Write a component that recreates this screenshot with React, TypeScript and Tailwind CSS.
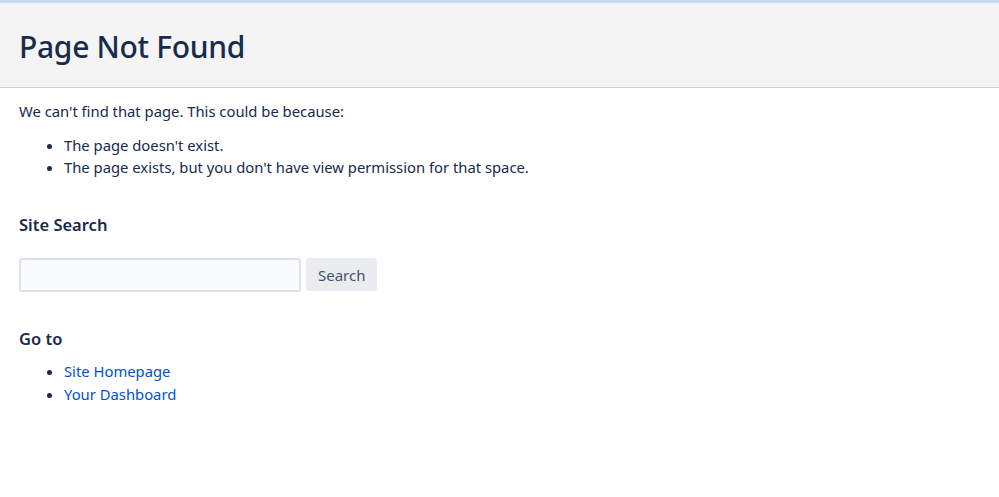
import React from 'react';

export default function App() {
  return (
    <div
      className="min-h-screen bg-white text-[#172b4d]"
      style={{ fontFamily: '"Noto Sans", "Open Sans", sans-serif' }}
    >
      {/* Page header */}
      <div className="border-t-[3px] border-[#c5dcf4] bg-[#f4f4f4] border-b border-b-[#d0d0d0] h-[88px] flex items-center px-[19px]">
        <h1 className="text-[30px] font-medium text-[#172b4d] tracking-[-0.3px] mt-[2px]">Page Not Found</h1>
      </div>

      <div className="px-[19px] pt-[12px] text-[14.8px] leading-[22px]">
        <p>We can't find that page. This could be because:</p>
        <ul className="list-disc pl-[45px] mt-[12px]">
          <li>The page doesn't exist.</li>
          <li>The page exists, but you don't have view permission for that space.</li>
        </ul>

        <h2 className="text-[16.5px] font-semibold mt-[35px] leading-[24px]">Site Search</h2>
        <form className="flex gap-[5px] mt-[21px]" onSubmit={(e) => e.preventDefault()}>
          <input
            type="text"
            className="w-[282px] h-[34px] rounded-[3px] border-2 border-[#dfe1e6] bg-[#fafbfc] outline-none"
          />
          <button className="h-[33px] px-[12px] rounded-[3px] bg-[#ebecf0] text-[#42526e] text-[15px]">
            Search
          </button>
        </form>

        <h2 className="text-[16.5px] font-semibold mt-[35px] leading-[24px]">Go to</h2>
        <ul className="list-disc pl-[45px] mt-[9px] leading-[23px]">
          <li><a href="#" className="text-[#0052cc]">Site Homepage</a></li>
          <li><a href="#" className="text-[#0052cc]">Your Dashboard</a></li>
        </ul>
      </div>
    </div>
  );
}
